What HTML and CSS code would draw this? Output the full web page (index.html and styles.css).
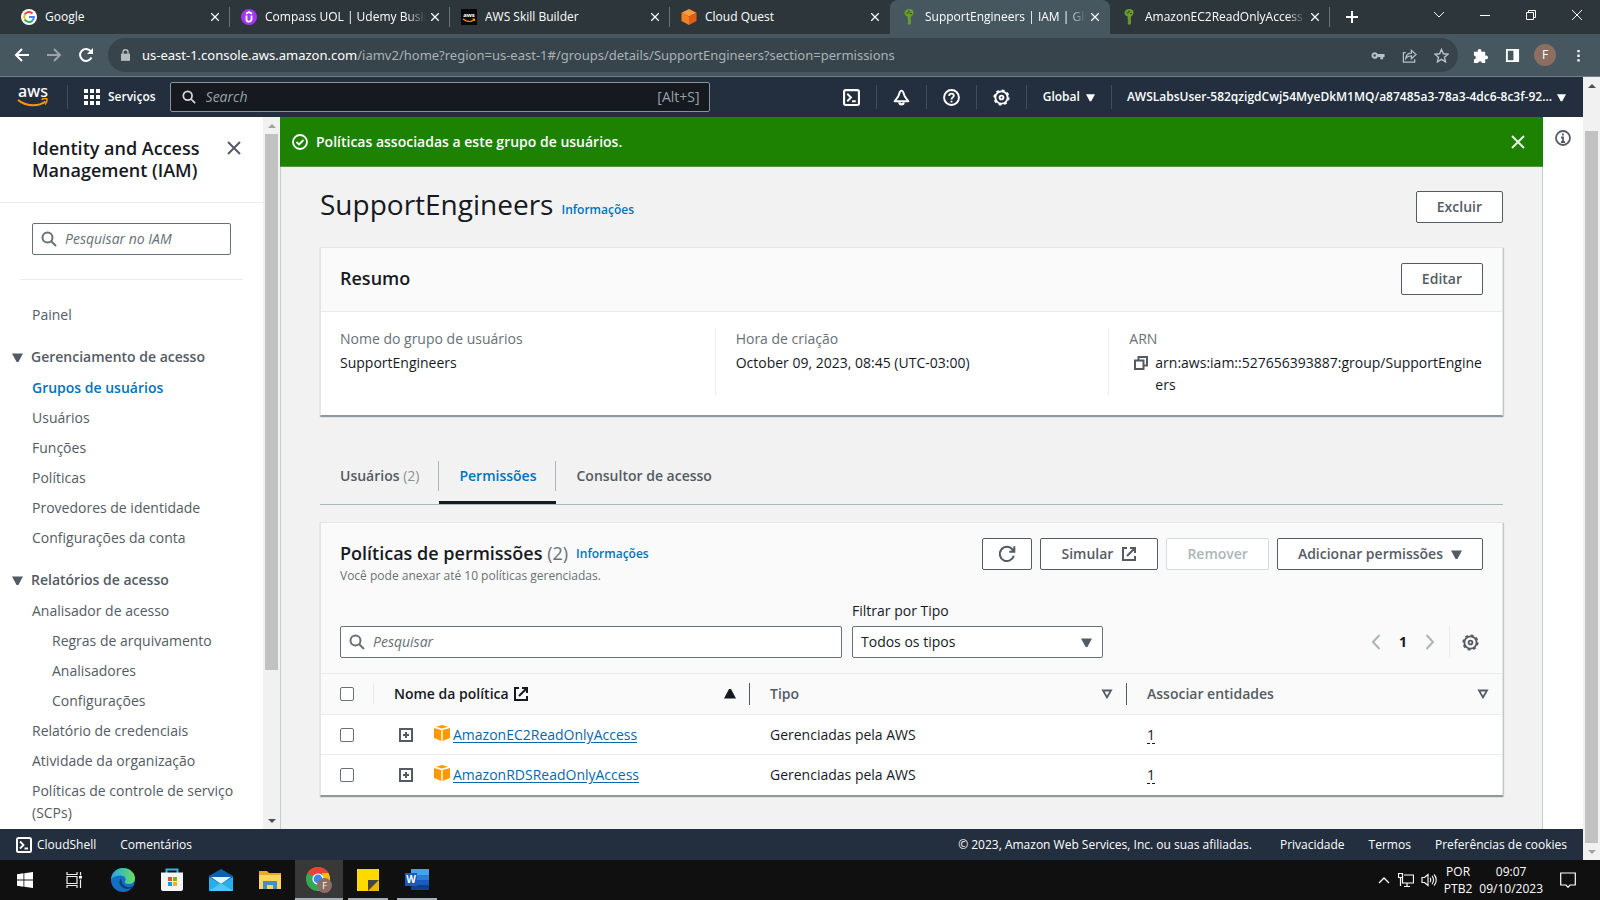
FILE: index.html
```
<!DOCTYPE html>
<html lang="pt-BR">
<head>
<meta charset="utf-8">
<title>SupportEngineers | IAM | Global</title>
<link rel="stylesheet" href="styles.css">
</head>
<body>
<svg class="sprite" aria-hidden="true">
  <symbol id="x" viewBox="0 0 16 16"><path d="M2 2l12 12M14 2L2 14" fill="none" stroke="currentColor" stroke-width="2"/></symbol>
  <symbol id="search" viewBox="0 0 16 16"><circle cx="6.500" cy="6.500" r="5" fill="none" stroke="currentColor" stroke-width="2"/><path d="M10 10l5 5" stroke="currentColor" stroke-width="2"/></symbol>
  <symbol id="down" viewBox="0 0 12 12"><path d="M0 1.500h12L7 11H5z" fill="currentColor"/></symbol>
  <symbol id="sort" viewBox="0 0 12 12"><path d="M2 2.500h8L6 9.500z" fill="none" stroke="currentColor" stroke-width="1.800"/></symbol>
  <symbol id="ext" viewBox="0 0 16 16"><path d="M6 2H2v12h12v-4M9 2h5v5M14 2L6 10" fill="none" stroke="currentColor" stroke-width="2"/></symbol>
  <symbol id="gear" viewBox="0 0 18 18"><circle cx="9" cy="9" r="6.500" fill="none" stroke="currentColor" stroke-width="2"/><circle cx="9" cy="9" r="7.700" fill="none" stroke="currentColor" stroke-width="1.800" stroke-dasharray="3 3.047"/><circle cx="9" cy="9" r="2" fill="none" stroke="currentColor" stroke-width="2"/></symbol>
  <symbol id="shell" viewBox="0 0 16 16"><rect x="1" y="1" width="14" height="14" rx="1.500" fill="none" stroke="currentColor" stroke-width="2"/><path d="M4 4.500L7.500 8 4 11.500M8.500 11.500H12" fill="none" stroke="currentColor" stroke-width="1.800"/></symbol>
  <symbol id="plus" viewBox="0 0 14 14"><path d="M1 1h12v12H1z" fill="none" stroke="currentColor" stroke-width="2"/><path d="M7 4v6M4 7h6" stroke="currentColor" stroke-width="2"/></symbol>
  <symbol id="box" viewBox="0 0 16 16"><path d="M8 0l6 1.700-6 1.800-6-1.800z" fill="#f90"/><path d="M0 3l7.300 2v11L0 13zM16 3L8.700 5v11L16 13z" fill="#f90"/></symbol>
  <symbol id="key" viewBox="0 0 16 16"><path d="M8 0c3 0 5 1.500 4.500 4S10 7.500 9.800 8l.2 6.500L8.300 16 6.500 14.500l1-1-1-1 1-1.200-1-1 .3-2.500C4.500 7 3.300 5.500 3.500 3.500 4 1 6 0 8 0z" fill="#6b9b2e"/><path d="M8 1.500v2M5.500 4h2M9 4.500h2" stroke="#2b4b20" stroke-width="1.200"/></symbol>
  <symbol id="chevl" viewBox="0 0 10 16"><path d="M8.500 1L2 8l6.500 7" fill="none" stroke="currentColor" stroke-width="2"/></symbol>
</svg>

<header class="tabstrip">
  <nav class="tabs">
    <div class="tab"><svg class="i16" viewBox="0 0 16 16"><circle cx="8" cy="8" r="8" fill="#fff"/><g fill="none" stroke-width="2"><path d="M11.500 4.500A4.900 4.900 0 0 0 3.800 5.500" stroke="#ea4335"/><path d="M3.800 5.500a5 5 0 0 0 0 5" stroke="#fbbc05"/><path d="M3.800 10.500a4.900 4.900 0 0 0 7.500 1.200" stroke="#34a853"/><path d="M11.300 11.700A4.900 4.900 0 0 0 12.900 8H8" stroke="#4285f4"/></g></svg><span class="tab-name">Google</span><button class="tab-x" aria-label="Fechar"><svg><use href="#x"/></svg></button></div>
    <div class="tab"><svg class="i16" viewBox="0 0 16 16"><circle cx="8" cy="8" r="8" fill="#a435f0"/><path d="M5 4.800l3-1.800 3 1.800M5.500 6.500v3.700a2.500 2.500 0 0 0 5 0V6.500" fill="none" stroke="#fff" stroke-width="1.800"/></svg><span class="tab-name fade">Compass UOL | Udemy Busin</span><button class="tab-x" aria-label="Fechar"><svg><use href="#x"/></svg></button></div>
    <div class="tab"><svg class="i16" viewBox="0 0 16 16"><path d="M0 0h16v16H0z" fill="#080808"/><text x="8" y="8" class="mini-aws">aws</text><path d="M2 10c4 3 8 3 11 1M11.500 10h2v2" fill="none" stroke="#f90" stroke-width="1.200"/></svg><span class="tab-name">AWS Skill Builder</span><button class="tab-x" aria-label="Fechar"><svg><use href="#x"/></svg></button></div>
    <div class="tab no-sep"><svg class="i16" viewBox="0 0 16 16"><path d="M8 0l7.500 3.700L8 7.500.5 3.700z" fill="#ff9b3d"/><path d="M.5 3.700L8 7.500V16L.5 12z" fill="#f58220"/><path d="M15.500 3.700L8 7.500V16l7.500-4z" fill="#e25d17"/></svg><span class="tab-name">Cloud Quest</span><button class="tab-x" aria-label="Fechar"><svg><use href="#x"/></svg></button></div>
    <div class="tab active no-sep"><svg class="i16"><use href="#key"/></svg><span class="tab-name fade">SupportEngineers | IAM | Glo</span><button class="tab-x" aria-label="Fechar"><svg><use href="#x"/></svg></button></div>
    <div class="tab"><svg class="i16"><use href="#key"/></svg><span class="tab-name fade">AmazonEC2ReadOnlyAccess</span><button class="tab-x" aria-label="Fechar"><svg><use href="#x"/></svg></button></div>
    <button class="newtab" aria-label="Nova guia"><svg class="i14" viewBox="0 0 14 14"><path d="M7 1v12M1 7h12" stroke="#fff" stroke-width="2"/></svg></button>
  </nav>
  <div class="winctl">
    <button aria-label="Pesquisar guias"><svg viewBox="0 0 12 12"><path d="M1 3l5 5 5-5" /></svg></button>
    <button aria-label="Minimizar"><svg viewBox="0 0 12 12"><path d="M1 6.500h10"/></svg></button>
    <button aria-label="Restaurar"><svg viewBox="0 0 12 12"><path d="M1.500 3.500h7v7h-7zM3.500 3.500v-2h7v7h-2"/></svg></button>
    <button aria-label="Fechar janela"><svg viewBox="0 0 12 12"><path d="M1 1l10 10M11 1L1 11"/></svg></button>
  </div>
</header>

<div class="toolbar">
  <button class="nav-btn" aria-label="Voltar"><svg viewBox="0 0 16 16"><path d="M15 8H2M8 2L2 8l6 6"/></svg></button>
  <button class="nav-btn dim" aria-label="Avançar"><svg viewBox="0 0 16 16"><path d="M1 8h13M8 2l6 6-6 6"/></svg></button>
  <button class="nav-btn" aria-label="Recarregar"><svg viewBox="0 0 16 16"><path d="M13.500 10.500A6 6 0 1 1 13 4.500"/><path d="M15 1v6H9z" fill="#fff" stroke="none"/></svg></button>
  <div class="omnibox">
    <svg class="lock" viewBox="0 0 10 13"><path d="M0 5h10v8H0z" fill="#b4bdc1"/><path d="M2.200 6V3.500a2.800 2.800 0 0 1 5.600 0V6" fill="none" stroke="#b4bdc1" stroke-width="1.500"/></svg>
    <span class="url"><b>us-east-1.console.aws.amazon.com</b>/iamv2/home?region=us-east-1#/groups/details/SupportEngineers?section=permissions</span>
    <button aria-label="Senhas"><svg viewBox="0 0 16 16"><path d="M5 4.500a3.500 3.500 0 1 0 3.300 5H11V12h3V9.500h1.500v-3H8.300A3.500 3.500 0 0 0 5 4.500zm0 2.200a1.300 1.300 0 1 1 0 2.600 1.300 1.300 0 0 1 0-2.600z" fill="#b8c1c5"/></svg></button>
    <button aria-label="Compartilhar"><svg viewBox="0 0 16 16"><path d="M4 5H1.500v10h12v-3M4 11c.5-4 2.500-5.500 6-5.500V2.500L15 7l-5 4.500V8.500C7.500 8.500 5.500 9 4 11z" fill="none" stroke="#b8c1c5" stroke-width="1.300"/></svg></button>
    <button aria-label="Favoritos"><svg viewBox="0 0 16 16"><path d="M8 1.500l2 4.600 5 .5-3.800 3.300 1.100 4.900L8 12.200l-4.300 2.600 1.100-4.900L1 6.600l5-.5z" fill="none" stroke="#b8c1c5" stroke-width="1.500"/></svg></button>
  </div>
  <div class="exts">
    <button aria-label="Extensões"><svg viewBox="0 0 16 16"><path d="M1 4h4V3a2 2 0 0 1 4 0v1h4v4h1a2 2 0 0 1 0 4h-1v4H9.500a2 2 0 0 0-4 0H1v-4a2 2 0 0 0 0-4z" fill="#fff"/></svg></button>
    <button aria-label="Painel lateral"><svg viewBox="0 0 16 16"><path d="M2 2h12v12H2z" fill="none" stroke="#fff" stroke-width="2"/><path d="M9 2h5v12H9z" fill="#fff"/></svg></button>
    <button class="avatar" aria-label="Perfil">F</button>
    <button aria-label="Menu"><svg viewBox="0 0 16 16"><path d="M8 2v2.500M8 7v2.500M8 12v2.500" stroke="#fff" stroke-width="2.500"/></svg></button>
  </div>
</div>

<div class="page">
  <div class="page-body">
    <header class="aws-head">
      <a class="logo" href="#" aria-label="AWS"><svg viewBox="0 0 32 22"><text x="16" y="11" class="logo-text">aws</text><path d="M1 14c8 6.500 20 7 27.500 1.500" fill="none" stroke="#f90" stroke-width="2"/><path d="M24.500 13.500c2-1 4.500-1 5.500-.5.300 1.500-.5 4-2 5.500" fill="none" stroke="#f90" stroke-width="1.500"/></svg></a>
      <button class="services"><svg class="i16" viewBox="0 0 16 16"><path d="M0 0h4v4H0zM6 0h4v4H6zM12 0h4v4h-4zM0 6h4v4H0zM6 6h4v4H6zM12 6h4v4h-4zM0 12h4v4H0zM6 12h4v4H6zM12 12h4v4h-4z" fill="#fff"/></svg>Serviços</button>
      <label class="aws-search"><svg class="i14"><use href="#search"/></svg><input type="search" placeholder="Search" aria-label="Search"><span>[Alt+S]</span></label>
      <div class="head-icons">
        <button aria-label="CloudShell"><svg><use href="#shell"/></svg></button>
        <button aria-label="Notificações"><svg viewBox="0 0 16 16"><path d="M8 1.500C6 1.500 6 5 4.800 7.200L1.500 11.500h13l-3.300-4.300C10 5 10 1.500 8 1.500z" fill="none" stroke="#fff" stroke-width="1.800" stroke-linejoin="round"/><path d="M6 12.500a2 2 0 0 0 4 0" fill="none" stroke="#fff" stroke-width="2"/></svg></button>
        <button aria-label="Ajuda"><svg viewBox="0 0 16 16"><circle cx="8" cy="8" r="7" fill="none" stroke="#fff" stroke-width="1.800"/><path d="M5.800 6.500c0-3 4.400-2.800 4.400-.2C10.200 8 8 7.800 8 9.800M8 11v1.700" fill="none" stroke="#fff" stroke-width="1.700"/></svg></button>
        <button aria-label="Configurações"><svg><use href="#gear"/></svg></button>
      </div>
      <button class="region">Global<svg class="arr"><use href="#down"/></svg></button>
      <button class="account"><span>AWSLabsUser-582qzigdCwj54MyeDkM1MQ/a87485a3-78a3-4dc6-8c3f-92...</span><svg class="arr"><use href="#down"/></svg></button>
    </header>

    <div class="console">
      <aside class="side">
        <div class="side-title"><h2>Identity and Access Management (IAM)</h2><button aria-label="Fechar painel"><svg class="i16"><use href="#x"/></svg></button></div>
        <div class="side-search"><label class="field"><svg class="i16"><use href="#search"/></svg><input type="search" placeholder="Pesquisar no IAM" aria-label="Pesquisar no IAM"></label></div>
        <nav class="side-nav">
          <a href="#">Painel</a>
          <h3><svg class="tri"><use href="#down"/></svg>Gerenciamento de acesso</h3>
          <a href="#" class="current">Grupos de usuários</a>
          <a href="#">Usuários</a>
          <a href="#">Funções</a>
          <a href="#">Políticas</a>
          <a href="#">Provedores de identidade</a>
          <a href="#">Configurações da conta</a>
          <h3><svg class="tri"><use href="#down"/></svg>Relatórios de acesso</h3>
          <a href="#">Analisador de acesso</a>
          <a href="#" class="sub">Regras de arquivamento</a>
          <a href="#" class="sub">Analisadores</a>
          <a href="#" class="sub">Configurações</a>
          <a href="#">Relatório de credenciais</a>
          <a href="#">Atividade da organização</a>
          <a href="#">Políticas de controle de serviço (SCPs)</a>
        </nav>
      </aside>
      <div class="sbar"><i class="up light"></i><div class="track"><div class="thumb side-thumb"></div></div><i class="dn"></i></div>

      <main class="main">
        <div class="flash"><svg class="i16" viewBox="0 0 16 16"><circle cx="8" cy="8" r="7" fill="none" stroke="#fff" stroke-width="1.800"/><path d="M4.500 8l2.500 2.500 4.500-4.500" fill="none" stroke="#fff" stroke-width="1.800"/></svg><span>Políticas associadas a este grupo de usuários.</span><button aria-label="Dispensar"><svg class="i16"><use href="#x"/></svg></button></div>
        <div class="content">
          <div class="page-title"><h1>SupportEngineers</h1><a class="info" href="#">Informações</a><button class="btn push">Excluir</button></div>

          <section class="card">
            <div class="card-head"><h2>Resumo</h2><button class="btn push">Editar</button></div>
            <dl class="summary">
              <div><dt>Nome do grupo de usuários</dt><dd>SupportEngineers</dd></div>
              <div><dt>Hora de criação</dt><dd>October 09, 2023, 08:45 (UTC-03:00)</dd></div>
              <div><dt>ARN</dt><dd class="arn"><button aria-label="Copiar ARN"><svg class="i14" viewBox="0 0 14 14"><path d="M1 4.500h8.500V13H1zM4.500 4V1H13v8.500h-3" fill="none" stroke="#545b64" stroke-width="2"/></svg></button><span>arn:aws:iam::527656393887:group/SupportEngineers</span></dd></div>
            </dl>
          </section>

          <div class="view-tabs" role="tablist">
            <button role="tab">Usuários <small>(2)</small></button>
            <button role="tab" class="on" aria-selected="true">Permissões</button>
            <button role="tab">Consultor de acesso</button>
          </div>

          <section class="card">
            <div class="policy-head">
              <div class="policy-top">
                <div><div class="policy-title"><h2>Políticas de permissões <span>(2)</span></h2><a class="info" href="#">Informações</a></div><p>Você pode anexar até 10 políticas gerenciadas.</p></div>
                <div class="actions">
                  <button class="btn icon" aria-label="Atualizar"><svg class="i18" viewBox="0 0 16 16"><path d="M14 9.500A6.300 6.300 0 1 1 12.800 4L14 5.500M14.500 1v5H10" fill="none" stroke="#545b64" stroke-width="1.800"/></svg></button>
                  <button class="btn">Simular<svg class="i16"><use href="#ext"/></svg></button>
                  <button class="btn" disabled>Remover</button>
                  <button class="btn">Adicionar permissões<svg class="arr big"><use href="#down"/></svg></button>
                </div>
              </div>
              <div class="filters">
                <label class="field find"><svg class="i16"><use href="#search"/></svg><input type="search" placeholder="Pesquisar" aria-label="Pesquisar"></label>
                <div class="type"><label for="type">Filtrar por Tipo</label><div class="select"><select id="type"><option>Todos os tipos</option></select><svg class="arr big"><use href="#down"/></svg></div></div>
                <div class="pager"><button aria-label="Anterior"><svg><use href="#chevl"/></svg></button><b>1</b><button aria-label="Próxima"><svg class="flip"><use href="#chevl"/></svg></button><button class="prefs" aria-label="Preferências"><svg><use href="#gear"/></svg></button></div>
              </div>
            </div>
            <table class="policies">
              <colgroup><col class="c-check"><col class="c-name"><col class="c-type"><col></colgroup>
              <thead><tr>
                <th><input type="checkbox" aria-label="Selecionar tudo"></th>
                <th class="sorted"><div>Nome da política<svg class="i16"><use href="#ext"/></svg><svg class="arr end flip-v"><use href="#down"/></svg></div></th>
                <th><div>Tipo<svg class="arr end"><use href="#sort"/></svg></div></th>
                <th><div>Associar entidades<svg class="arr end"><use href="#sort"/></svg></div></th>
              </tr></thead>
              <tbody>
                <tr><td><input type="checkbox" aria-label="AmazonEC2ReadOnlyAccess"></td><td><div class="policy"><button aria-label="Expandir"><svg class="i14"><use href="#plus"/></svg></button><svg class="i16 cube"><use href="#box"/></svg><a href="#">AmazonEC2ReadOnlyAccess</a></div></td><td>Gerenciadas pela AWS</td><td><span class="count">1</span></td></tr>
                <tr><td><input type="checkbox" aria-label="AmazonRDSReadOnlyAccess"></td><td><div class="policy"><button aria-label="Expandir"><svg class="i14"><use href="#plus"/></svg></button><svg class="i16 cube"><use href="#box"/></svg><a href="#">AmazonRDSReadOnlyAccess</a></div></td><td>Gerenciadas pela AWS</td><td><span class="count">1</span></td></tr>
              </tbody>
            </table>
          </section>
        </div>
      </main>
      <aside class="tools"><button aria-label="Informações"><svg class="i16" viewBox="0 0 16 16"><circle cx="8" cy="8" r="7" fill="none" stroke="#545b64" stroke-width="1.800"/><path d="M8 3.500v2M6 7.500h2V12M6 12h4" fill="none" stroke="#545b64" stroke-width="1.800"/></svg></button></aside>
    </div>

    <footer class="aws-foot">
      <a href="#" class="shell"><svg class="i16"><use href="#shell"/></svg>CloudShell</a>
      <a href="#">Comentários</a>
      <span class="copy">© 2023, Amazon Web Services, Inc. ou suas afiliadas.</span>
      <a href="#">Privacidade</a><a href="#">Termos</a><a href="#">Preferências de cookies</a>
    </footer>
  </div>
  <div class="sbar"><i class="up"></i><div class="track page-track"><div class="thumb page-thumb"></div></div><i class="dn light"></i></div>
</div>

<footer class="taskbar">
  <div class="apps">
    <button aria-label="Iniciar"><svg class="i16" viewBox="0 0 16 16"><path d="M0 2.200l6.500-.9v6.300H0zM7.300 1.200L16 0v7.600H7.300zM0 8.400h6.500v6.300L0 13.800zM7.300 8.400H16V16l-8.700-1.200z" fill="#fff"/></svg></button>
    <button aria-label="Visão de tarefas"><svg class="i16" viewBox="0 0 16 16"><path d="M1 0v2.500h10V0M1 16v-2.500h10V16M1 4.500h10v7H1zM14.500 0v3.500M14.500 7.500V16" fill="none" stroke="#eee" stroke-width="1.200"/><path d="M13 4h3v2.500h-3z" fill="#fff"/></svg></button>
    <button aria-label="Edge"><svg class="i24" viewBox="0 0 24 24"><defs><linearGradient id="eg" x1="0" y1="0" x2="1" y2="0"><stop offset="0" stop-color="#22a6e8"/><stop offset="1" stop-color="#6ade5e"/></linearGradient></defs><circle cx="12" cy="12" r="12" fill="#1470c5"/><path d="M0 11C1 4 6 0 12 0c7 0 12 5 12 10 0 4-3 6-6.500 6-3 0-4-1.500-3.500-2.500 2-3-.5-6-4.500-6S2 9 0 11z" fill="url(#eg)"/><path d="M10 10c-4 5 0 11 7 11 3 0 5-2 5.500-3-6 3-12 0-12.500-8z" fill="#0b3f7c"/></svg></button>
    <button aria-label="Store"><svg class="i24" viewBox="0 0 24 24"><path d="M6.500 6V1.500h11V6" fill="none" stroke="#35b3e8" stroke-width="2"/><path d="M1 4.500h22V21a2 2 0 0 1-2 2H3a2 2 0 0 1-2-2z" fill="#f4f4f4"/><path d="M8 9h4v4H8z" fill="#e94f1d"/><path d="M13 9h4v4h-4z" fill="#7cb800"/><path d="M8 14h4v4H8z" fill="#08a1e8"/><path d="M13 14h4v4h-4z" fill="#fbb500"/></svg></button>
    <button aria-label="Email"><svg class="i24" viewBox="0 0 24 24"><path d="M0 8l12-7 12 7v14H0z" fill="#1060b0"/><path d="M2 9h20l-10 7z" fill="#e6f3fb"/><path d="M0 9l12 7 12-7v14H0z" fill="#28aee9"/><path d="M0 23l12-8 12 8z" fill="#50c7f5"/></svg></button>
    <button aria-label="Explorador de Arquivos"><svg class="i24" viewBox="0 0 24 24"><path d="M1 3h8l2 2h12v16H1z" fill="#e7a928"/><path d="M1 7h22v14H1z" fill="#ffd65c"/><path d="M5 21v-8h14v8h-4v-4H9v4z" fill="#3e8fd0"/></svg></button>
    <button class="act run" aria-label="Chrome"><svg class="i26" viewBox="0 0 26 26"><circle cx="12" cy="12" r="12" fill="#34a853"/><path d="M1.600 6A12 12 0 0 1 22.400 6H12v6z" fill="#ea4335"/><path d="M22.400 6A12 12 0 0 1 12 24l5-10-1-8z" fill="#fbbc05"/><circle cx="12" cy="12" r="5.600" fill="#fff"/><circle cx="12" cy="12" r="4.400" fill="#4285f4"/><circle cx="18.500" cy="18.500" r="7.500" fill="#8d6e63"/><text x="18.500" y="22" class="badge">F</text></svg></button>
    <button class="run" aria-label="Notas"><svg class="i24" viewBox="0 0 24 24"><path d="M1 1h22v11l-11 11H1z" fill="#ffd900"/><path d="M12 23V12h11z" fill="#454545"/><path d="M23 12v11H12z" fill="#e2bb00"/></svg></button>
    <button class="run" aria-label="Word"><svg class="i24" viewBox="0 0 24 24"><path d="M6 1h18v6H6z" fill="#41a5ee"/><path d="M6 7h18v5H6z" fill="#2b7cd3"/><path d="M6 12h18v5H6z" fill="#185abd"/><path d="M6 17h18v5H6z" fill="#103f91"/><path d="M0 5h12v13H0z" fill="#185abd"/><text x="6" y="15" class="word">W</text></svg></button>
  </div>
  <div class="tray">
    <svg class="i14" viewBox="0 0 14 14"><path d="M2 10l5-5 5 5" fill="none" stroke="#fff" stroke-width="1.300"/></svg>
    <svg class="i16" viewBox="0 0 16 16"><path d="M6 3h9.500v8H4.500V6M9 11v3.500M6 14.500h6M.5 1.500h4v4h-4zM2.500 5.500V14" fill="none" stroke="#fff" stroke-width="1.200"/></svg>
    <svg class="i16" viewBox="0 0 16 16"><path d="M1 5.500h2.500L7 2.500v11l-3.500-3H1zM9 6c1 1 1 3 0 4M11 4c2 2 2 6 0 8M13 2.500c3 3 3 8 0 11" fill="none" stroke="#fff" stroke-width="1.100"/></svg>
    <div class="lang">POR<br>PTB2</div>
    <div class="clock">09:07<br>09/10/2023</div>
    <svg class="i16 note" viewBox="0 0 16 16"><path d="M.7 1h14.600v12H10l-2 2.300L6 13H.7z" fill="none" stroke="#fff" stroke-width="1.200"/></svg>
  </div>
</footer>
</body>
</html>
```
FILE: styles.css
```
* { box-sizing: border-box; }
body {
  margin: 0;
  height: 100vh;
  display: flex;
  flex-direction: column;
  overflow: hidden;
  font: 14px/22px "Open Sans", "Noto Sans", sans-serif;
  color: #16191f;
  background: #fff;
}
button, input, select { font: inherit; color: inherit; }
button { background: none; border: 0; padding: 0; display: inline-flex; align-items: center; justify-content: center; flex: none; }
h1, h2, h3, p, dl, dd { margin: 0; }
a { color: inherit; text-decoration: none; }
svg { flex: none; display: block; }
.sprite { position: absolute; width: 0; height: 0; }
.i14 { width: 14px; height: 14px; }
.i16 { width: 16px; height: 16px; }
.i18 { width: 18px; height: 18px; }
.i24 { width: 24px; height: 24px; }
.i26 { width: 26px; height: 26px; }
.arr { width: 9px; height: 9px; }
.arr.big { width: 11px; height: 11px; }
.push { margin-left: auto; }

/* browser chrome */
.tabstrip { height: 34px; flex: none; display: flex; justify-content: space-between; background: #2d363b; color: #fff; font-size: 12px; }
.tabs { flex: 1; display: flex; min-width: 0; padding-left: 10px; }
.tab { flex: 0 1 220px; min-width: 0; display: flex; align-items: center; gap: 8px; padding: 0 7px 0 11px; position: relative; }
.tab::after { content: ""; position: absolute; right: 0; top: 7px; bottom: 7px; width: 1px; background: #66737a; }
.tab.no-sep::after { display: none; }
.tab.active { background: #465760; border-radius: 8px 8px 0 0; }
.tab-name { flex: 1; min-width: 0; overflow: hidden; white-space: nowrap; }
.tab-name.fade { -webkit-mask-image: linear-gradient(90deg, #000 88%, transparent); mask-image: linear-gradient(90deg, #000 88%, transparent); }
.tab-x { width: 16px; height: 16px; margin-left: -7px; }
.tab-x svg { width: 10px; height: 10px; }
.newtab { width: 44px; }
.mini-aws { font: 700 6px "Noto Sans", sans-serif; fill: #fff; text-anchor: middle; }
.winctl { display: flex; padding-bottom: 4px; }
.winctl button { width: 46px; }
.winctl svg { width: 12px; height: 12px; fill: none; stroke: #fff; }
.toolbar { height: 43px; flex: none; display: flex; align-items: center; padding: 0 6px; background: #465760; border-bottom: 1px solid #6f7f88; }
.nav-btn { width: 32px; height: 32px; }
.nav-btn svg { width: 16px; height: 16px; fill: none; stroke: #fff; stroke-width: 2; }
.nav-btn.dim { opacity: .45; }
.omnibox { flex: 1; min-width: 0; height: 34px; margin-left: 6px; border-radius: 17px; background: #38444b; display: flex; align-items: center; padding: 0 1px 0 13px; }
.lock { width: 9px; height: 12px; margin-right: 12px; }
.url { flex: 1; overflow: hidden; white-space: nowrap; font-family: "Noto Sans", sans-serif; font-size: 13px; color: #a9b2b6; }
.url b { font-weight: 400; color: #fff; }
.omnibox button, .exts button { width: 32px; }
.omnibox button svg, .exts svg { width: 15px; height: 15px; }
.exts { display: flex; align-items: center; padding-left: 6px; }
.exts .avatar { width: 22px; height: 22px; margin: 0 6px; border-radius: 50%; background: #8d6e63; color: #fff; font-size: 12px; }

/* page frame */
.page { flex: 1; min-height: 0; display: flex; }
.page-body { flex: 1; min-width: 0; display: flex; flex-direction: column; }
.sbar { width: 17px; flex: none; background: #f1f1f1; display: flex; flex-direction: column; align-items: center; }
.sbar i { flex: none; width: 17px; height: 17px; display: flex; align-items: center; justify-content: center; }
.sbar i::before { content: ""; border: 4px solid transparent; }
.sbar .up::before { border-top: 0; border-bottom-color: #505050; }
.sbar .dn::before { border-bottom: 0; border-top-color: #505050; }
.sbar .up.light::before { border-bottom-color: #a3a3a3; }
.sbar .dn.light::before { border-top-color: #a3a3a3; }
.track { flex: 1; width: 13px; }
.thumb { background: #c1c1c1; }
.side-thumb { height: 79%; }
.page-track { padding-top: 37px; display: flex; }
.page-thumb { width: 100%; }

/* service header */
.aws-head { height: 40px; flex: none; display: flex; align-items: center; background: #232f3e; color: #fff; font-size: 12px; font-weight: 600; }
.logo { width: 68px; height: 24px; border-right: 1px solid #414d5c; padding: 1px 0 0 17px; }
.logo svg { width: 32px; height: 22px; overflow: visible; }
.logo-text { font: 500 16px "Noto Sans", sans-serif; fill: #fff; text-anchor: middle; }
.services { gap: 8px; margin: 0 14px 0 16px; }
.aws-search { flex: 0 1 540px; height: 30px; display: flex; align-items: center; gap: 10px; padding: 0 9px 0 11px; background: #16191f; border: 1px solid #879596; border-radius: 2px; color: #d5dbdb; font-size: 14px; font-weight: 400; }
.aws-search input { flex: 1; min-width: 0; background: none; border: 0; outline: 0; padding: 0; }
.aws-search span { color: #95a5a6; }
input::placeholder { font-style: italic; color: #687078; opacity: 1; }
.aws-search input::placeholder { color: #95a5a6; }
.head-icons { display: flex; margin-left: auto; }
.head-icons button { width: 50px; height: 24px; border-right: 1px solid #414d5c; }
.head-icons svg { width: 17px; height: 17px; }
.region { gap: 6px; height: 24px; padding: 0 16px; border-right: 1px solid #414d5c; }
.account { gap: 5px; padding: 0 17px 0 15px; }

/* console */
.console { flex: 1; min-height: 0; display: flex; background: #f2f2f2; }
.side { width: 263px; flex: none; background: #fff; overflow: hidden; }
.side-title { display: flex; align-items: flex-start; justify-content: space-between; padding: 20px 21px 21px 32px; border-bottom: 1px solid #eaeded; }
.side-title h2 { width: 180px; font-size: 18px; line-height: 22px; font-weight: 600; }
.side-title button { height: 22px; color: #545b64; }
.side-search { margin: 0 20px; padding: 20px 12px 24px; border-bottom: 1px solid #eaeded; }
.field { display: flex; align-items: center; gap: 8px; height: 32px; padding: 0 8px; background: #fff; border: 1px solid #687078; border-radius: 2px; color: #687078; }
.field input { flex: 1; min-width: 0; border: 0; outline: 0; padding: 0; background: none; }
.side-nav { padding: 24px 20px 0 32px; color: #545b64; }
.side-nav a { display: block; margin-bottom: 8px; }
.side-nav .sub { padding-left: 20px; }
.side-nav .current { color: #0073bb; font-weight: 600; }
.side-nav h3 { display: flex; align-items: center; gap: 8px; margin: 20px 0 9px -20px; font-size: 14px; line-height: 22px; font-weight: 600; }
.tri { width: 11px; height: 11px; }

.main { flex: 1; min-width: 0; border-left: 1px solid #c5cccc; border-right: 1px solid #c5cccc; }
.flash { height: 50px; margin: 0 -1px; display: flex; align-items: center; gap: 8px; padding: 0 17px 0 12px; background: #1d8102; border-bottom: 1px solid #5d8f52; color: #fff; font-size: 14px; font-weight: 600; }
.flash button { margin-left: auto; color: #e9f2e6; }
.content { padding: 24px 39px 0 39px; }
.page-title { display: flex; align-items: flex-start; margin-bottom: 24px; }
h1 { font-size: 28px; line-height: 26px; font-weight: 400; }
.info { margin-left: 8px; color: #0073bb; font-size: 12px; font-weight: 600; }
.page-title .info { padding-top: 8px; }
.btn { height: 32px; padding: 0 20px; gap: 8px; background: #fff; border: 1px solid #545b64; border-radius: 2px; color: #545b64; font-weight: 600; }
.btn.icon { padding: 0 15px; }
.btn:disabled { border-color: #d5dbdb; color: #aab7b8; }
.card { background: #fff; border: 1px solid #e3e6e6; border-bottom-color: #8d9999; box-shadow: 0 1px 1px rgba(0, 28, 36, .3), 1px 1px 1px rgba(0, 28, 36, .15); }
.card-head { display: flex; align-items: center; padding: 15px 19px 16px; background: #fafafa; border-bottom: 1px solid #eaeded; }
.card h2 { font-size: 18px; line-height: 22px; font-weight: 600; }
.card-head h2 { padding-bottom: 3px; }
.summary { display: grid; grid-template-columns: 1fr 1fr 1fr; padding: 16px 0 19px; }
.summary > div { min-height: 68px; padding: 0 20px 0 20px; }
.summary > div:first-child { padding-left: 19px; }
.summary > div + div { border-left: 1px solid #eaeded; }
.summary dt { color: #687078; margin-bottom: 2px; }
.arn { display: flex; align-items: flex-start; gap: 7px; padding-left: 5px; }
.arn button { height: 22px; }
.arn span { word-break: break-all; }
.view-tabs { display: flex; align-items: flex-start; margin: 45px 0 17px; border-bottom: 1px solid #aab7b8; }
.view-tabs button { position: relative; height: 43px; padding: 0 20px 10px; color: #545b64; font-weight: 600; border-bottom: 3px solid transparent; white-space: pre; }
.view-tabs button + button::before { content: ""; position: absolute; left: -1px; top: 0; height: 30px; width: 1px; background: #aab7b8; }
.view-tabs small { font-size: 14px; font-weight: 400; color: #879596; }
.view-tabs .on { color: #0073bb; border-color: #16191f; }

.policy-head { padding: 15px 19px; background: #fafafa; }
.policy-top { display: flex; justify-content: space-between; align-items: flex-start; }
.policy-title { display: flex; align-items: center; padding-top: 2px; }
.policy-title h2 span { color: #687078; font-weight: 400; }
.policy-title .info { padding-top: 3px; }
.policy-top p { margin-top: 1px; font-size: 12px; line-height: 20px; color: #687078; }
.actions { display: flex; gap: 8px; }
.filters { display: flex; align-items: flex-end; gap: 10px; padding-top: 14px; }
.find { flex: 0 1 502px; }
.type { flex: 0 1 251px; }
.type label { display: block; line-height: 22px; margin-bottom: 4px; }
.select { display: flex; align-items: center; position: relative; }
.select select { flex: 1; height: 32px; appearance: none; background: #fff; border: 1px solid #687078; border-radius: 2px; padding: 0 8px; }
.select svg { position: absolute; right: 11px; color: #545b64; pointer-events: none; }
.pager { margin-left: auto; height: 32px; display: flex; align-items: center; gap: 18px; }
.pager svg { width: 10px; height: 16px; color: #aab7b8; }
.pager .flip { transform: scaleX(-1); }
.pager .prefs { height: 32px; border-left: 1px solid #eaeded; padding: 0 4px 0 12px; margin-left: -4px; }
.pager .prefs svg { width: 17px; height: 17px; color: #545b64; }
.policies { width: 100%; border-collapse: collapse; table-layout: fixed; }
.c-check { width: 52px; }
.c-name { width: 376px; }
.c-type { width: 377px; }
.policies th { height: 41px; padding: 0; text-align: left; background: #fafafa; border-top: 1px solid #eaeded; color: #545b64; font-weight: 600; }
.policies th div { height: 22px; display: flex; align-items: center; gap: 4px; padding: 0 13px 0 20px; border-left: 1px solid #545b64; }
.policies th .end { margin-left: auto; width: 12px; height: 12px; }
.policies .sorted div { border-left-color: #eaeded; color: #16191f; }
.flip-v { transform: scaleY(-1); }
.policies td { height: 40px; padding: 0 20px 0 21px; border-top: 1px solid #eaeded; }
.policies td:first-child, .policies th:first-child { padding: 0 0 0 19px; }
.policies input { appearance: none; display: block; width: 14px; height: 14px; margin: 0; border: 1px solid #687078; border-radius: 2px; background: #fff; }
.policy { display: flex; align-items: center; padding-left: 5px; color: #545b64; }
.policy .cube { margin: 0 3px 4px 21px; }
.policy a { color: #0a67a8; text-decoration: underline; text-underline-offset: 2px; }
.count { border-bottom: 1px dashed #16191f; line-height: 16px; display: inline-block; }
.tools { width: 40px; flex: none; background: #fff; display: flex; justify-content: center; align-items: flex-start; padding-top: 13px; }

.aws-foot { height: 31px; flex: none; display: flex; align-items: center; gap: 24px; padding: 0 16px; background: #232f3e; color: #fff; font-size: 12px; font-weight: 500; white-space: nowrap; }
.shell { display: flex; align-items: center; gap: 5px; }
.copy { margin-left: auto; padding-right: 4px; }

/* taskbar */
.taskbar { height: 40px; flex: none; display: flex; justify-content: space-between; background: #101010; color: #fff; font-size: 12px; line-height: 17px; }
.apps { display: flex; gap: 1px; padding-left: 1px; }
.apps button { position: relative; width: 48px; }
.apps .act { background: #383838; }
.apps .run::after { content: ""; position: absolute; left: 4px; right: 4px; bottom: 0; height: 2px; background: #a8b0b6; }
.apps .act::after { left: 0; right: 0; }
.badge { font: 9px "Open Sans", sans-serif; fill: #fff; text-anchor: middle; }
.word { font: 700 10px "Open Sans", sans-serif; fill: #fff; text-anchor: middle; }
.tray { display: flex; align-items: center; gap: 7px; padding-right: 24px; }
.lang, .clock { text-align: center; }
.note { margin-left: 10px; }
```
